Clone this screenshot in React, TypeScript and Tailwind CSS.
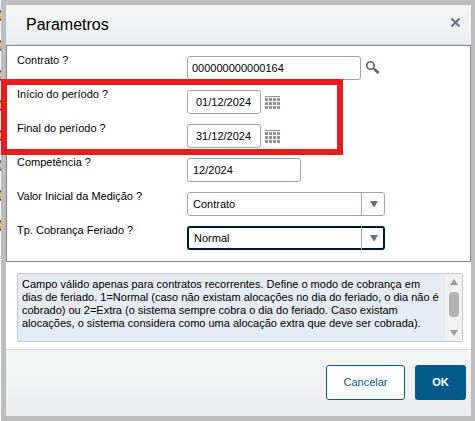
import type { ReactNode } from "react";

const pageMarks = [11, 41, 71, 101, 131, 161, 191, 221];

const inputClass =
  "h-6 rounded-[3px] border border-[#9aa5a7] bg-white text-[11px] text-black outline-none";

// Small grid button that opens the date picker
function CalendarButton({ label }: { label: string }) {
  return (
    <button type="button" aria-label={label} className="shrink-0">
      <svg width="16" height="16" viewBox="0 0 16 16" shapeRendering="crispEdges" fill="#8b93a1">
        <rect x="0" y="2" width="15" height="1" />
        {[4, 8, 12].map((y) =>
          [0, 4, 8, 12].map((x) => <rect key={`${x}-${y}`} x={x} y={y} width="3" height="3" />)
        )}
      </svg>
    </button>
  );
}

function Row({ id, label, children }: { id: string; label: string; children: ReactNode }) {
  return (
    <div className="flex h-6 items-start">
      <label htmlFor={id} className="w-[170px] shrink-0 text-[11px] leading-[8px]">
        {label}
      </label>
      {children}
    </div>
  );
}

function DateField({ id, label, value }: { id: string; label: string; value: string }) {
  return (
    <Row id={id} label={label}>
      <div className="flex items-center gap-1">
        <input id={id} defaultValue={value} className={`${inputClass} w-[74px] px-2`} />
        <CalendarButton label={`Abrir calendário: ${label}`} />
      </div>
    </Row>
  );
}

function SelectField({ id, label, options, focused }: { id: string; label: string; options: string[]; focused?: boolean }) {
  return (
    <Row id={id} label={label}>
      <div className="relative w-[198px]">
        <select
          id={id}
          defaultValue={options[0]}
          className={
            focused
              ? "block h-6 w-full appearance-none rounded-[3px] border-2 border-[#00182e] bg-white px-[5px] text-[11px] text-black outline-none"
              : "block h-6 w-full appearance-none rounded-[3px] border border-[#9aa5a7] bg-white px-[5px] text-[11px] text-black outline-none"
          }
        >
          {options.map((option) => (
            <option key={option}>{option}</option>
          ))}
        </select>
        <span className="pointer-events-none absolute inset-y-0 right-0 flex w-6 items-center justify-center border-l border-[#9aa5a7]">
          <svg width="8" height="6" viewBox="0 0 8 6" fill="#667080">
            <path d="M0 0h8L4.500 6h-1z" />
          </svg>
        </span>
      </div>
    </Row>
  );
}

export default function App() {
  return (
    <div className="relative flex min-h-screen bg-white font-['Liberation_Sans',Arial,sans-serif] text-black">
      {/* Sliver of the page behind the dialog */}
      <div className="w-px shrink-0">
        <svg width="1" height="300" viewBox="0 0 1 300" shapeRendering="crispEdges">
          <rect width="1" height="242" fill="#eef0f2" />
          {pageMarks.map((y) => (
            <g key={y}>
              <rect y={y - 1} width="1" height="1" fill="#4c9be0" />
              <rect y={y} width="1" height="1" fill="#5c2c1c" />
              <rect y={y + 1} width="1" height="7" fill="#ec9a42" />
              <rect y={y + 3} width="1" height="2" fill="#f8d08c" />
              <rect y={y + 8} width="1" height="1" fill="#5c2c1c" />
              <rect y={y + 9} width="1" height="1" fill="#4c9be0" />
            </g>
          ))}
        </svg>
      </div>

      <div className="flex flex-1 bg-[#bdbdbd] py-[5px] pr-1 pl-[5px]">
        <div role="dialog" aria-labelledby="title" className="flex flex-1 flex-col bg-white">
          <header className="flex h-10 items-center justify-between border-b border-[#dcdce0] bg-linear-to-b from-[#f4f6f5] to-[#ecedf0] pr-[11px] pl-5">
            <h1 id="title" className="text-base">Parametros</h1>
            <button type="button" aria-label="Fechar" className="pb-1">
              <svg width="9" height="9" viewBox="0 0 9 9" stroke="#667080" strokeWidth="2">
                <path d="M.5.5l8 8M8.500.5l-8 8" />
              </svg>
            </button>
          </header>

          <form className="flex flex-col gap-[10px] border border-[#85858c] px-[10px] pt-[10px] pb-[11px]">
            <Row id="contrato" label="Contrato ?">
              <div className="flex items-center gap-1">
                <input id="contrato" defaultValue="000000000000164" className={`${inputClass} w-[174px] px-1`} />
                <button type="button" aria-label="Pesquisar contrato">
                  <svg width="16" height="16" viewBox="0 0 16 16" fill="none" stroke="#566173">
                    <circle cx="5.500" cy="5.500" r="3.700" strokeWidth="1.600" />
                    <path d="M8.200 8.200l1.800 1.600" strokeWidth="1.600" />
                    <path d="M9.500 9.300l4 3.700" strokeWidth="2.600" />
                  </svg>
                </button>
              </div>
            </Row>
            <DateField id="inicio" label="Início do período ?" value="01/12/2024" />
            <DateField id="final" label="Final do período ?" value="31/12/2024" />
            <Row id="competencia" label="Competência ?">
              <input id="competencia" defaultValue="12/2024" className={`${inputClass} w-[114px] px-[5px]`} />
            </Row>
            <SelectField id="valor" label="Valor Inicial da Medição ?" options={["Contrato"]} />
            <SelectField id="cobranca" label="Tp. Cobrança Feriado ?" options={["Normal", "Extra"]} focused />
          </form>

          {/* Help text of the focused field */}
          <div className="mt-[11px] mr-2 mb-[7px] ml-[11px] flex h-[69px] rounded-[2px] border border-[#c5c8cc] bg-[#e6eaf2]">
            <p className="flex-1 px-1 pt-1 text-[11px] leading-[13px]">
              Campo válido apenas para contratos recorrentes. Define o modo de cobrança em dias de feriado. 1=Normal (caso não existam alocações no dia do feriado, o dia não é cobrado) ou 2=Extra (o sistema sempre cobra o dia do feriado. Caso existam alocações, o sistema considera como uma alocação extra que deve ser cobrada).
            </p>
            <div className="flex w-[17px] shrink-0 flex-col items-center bg-[#f1f1f1] py-[5px]">
              <svg width="8" height="6" viewBox="0 0 8 6" fill="#9c9c9c">
                <path d="M0 6h8L4 0z" />
              </svg>
              <div className="mt-[7px] h-[25px] w-[10px] rounded-[4px] bg-[#b2b2b2]" />
              <svg className="mt-auto" width="8" height="6" viewBox="0 0 8 6" fill="#9c9c9c">
                <path d="M0 0h8L4 6z" />
              </svg>
            </div>
          </div>

          <footer className="flex flex-1 items-start justify-end gap-[10px] border-t border-[#dcdce0] bg-linear-to-b from-[#f4f6f5] to-[#ecedf0] px-[5px] py-[15px]">
            <button type="button" className="h-[35px] w-[79px] rounded-[3px] border border-[#045a8d] bg-white text-[11px] text-[#045a8d]">
              Cancelar
            </button>
            <button type="button" className="h-[35px] w-[51px] rounded-[3px] bg-[#045a8d] text-[11px] font-bold text-white">
              OK
            </button>
          </footer>
        </div>
      </div>

      {/* Highlight around the period fields */}
      <div className="pointer-events-none absolute top-[79px] left-px h-[76px] w-[342px] border-6 border-[#e81c1c]" />
    </div>
  );
}
